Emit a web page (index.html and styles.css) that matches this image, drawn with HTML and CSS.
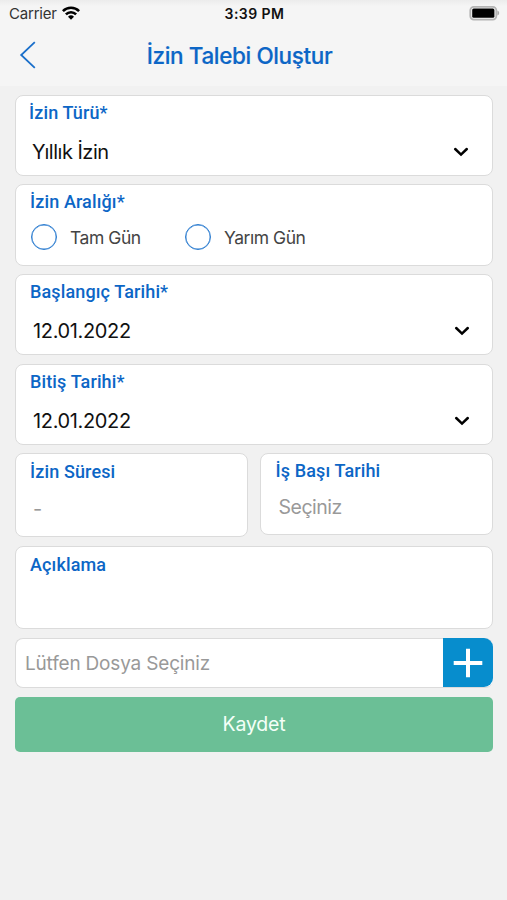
FILE: index.html
```html
<!DOCTYPE html>
<html lang="tr">
<head>
<meta charset="utf-8">
<meta name="viewport" content="width=device-width, initial-scale=1">
<title>İzin Talebi Oluştur</title>
<link rel="stylesheet" href="styles.css">
</head>
<body>
<header class="top">
  <div class="status">
    <div class="carrier"><span>Carrier</span>
      <svg class="wifi" width="18" height="14" viewBox="0 0 18 14" fill="none" stroke="#000" stroke-width="2.6"><path d="M.9 5.2a11.4 11.4 0 0 1 16.2 0M3.9 8.3a7.2 7.2 0 0 1 10.2 0"/><path d="M9 13.8L6 10.8a4.3 4.3 0 0 1 6 0z" fill="#000" stroke="none"/></svg>
    </div>
    <div class="time">3:39 PM</div>
    <svg class="battery" width="32" height="16" viewBox="0 0 32 16"><rect x="2.3" y="1.8" width="26" height="12.8" rx="3.5" fill="#f4f4f4" stroke="#b4b4b4" stroke-width="1.8"/><rect x="4.2" y="3.6" width="22.2" height="9.2" rx="1.5"/><path d="M29.4 5.6c2.4.8 2.4 4.2 0 5z" fill="#aaa"/></svg>
  </div>
  <div class="nav">
    <svg class="back" width="18" height="30" viewBox="0 0 18 30" fill="none" stroke="#1a6fca" stroke-width="1.8"><path d="M15.8 2.2L2.2 15l13.6 12.8"/></svg>
    <h1>İzin Talebi Oluştur</h1>
  </div>
</header>
<main class="form">
  <section class="card type">
    <div class="label">İzin Türü*</div>
    <div class="select"><span class="value v-type">Yıllık İzin</span><svg class="chevron" width="16" height="10" viewBox="0 0 16 10"><path d="M2.2 2L8 7.6 13.8 2"/></svg></div>
  </section>
  <section class="card">
    <div class="label">İzin Aralığı*</div>
    <div class="radios">
      <div class="radio"><i class="circle"></i><span>Tam Gün</span></div>
      <div class="radio"><i class="circle"></i><span>Yarım Gün</span></div>
    </div>
  </section>
  <section class="card">
    <div class="label">Başlangıç Tarihi*</div>
    <div class="select"><span class="value">12.01.2022</span><svg class="chevron" width="16" height="10" viewBox="0 0 16 10"><path d="M2.2 2L8 7.6 13.8 2"/></svg></div>
  </section>
  <section class="card">
    <div class="label">Bitiş Tarihi*</div>
    <div class="select"><span class="value">12.01.2022</span><svg class="chevron" width="16" height="10" viewBox="0 0 16 10"><path d="M2.2 2L8 7.6 13.8 2"/></svg></div>
  </section>
  <div class="pair">
    <section class="card duration">
      <div class="label">İzin Süresi</div>
      <div class="select"><span class="value hint">-</span></div>
    </section>
    <section class="card return">
      <div class="label">İş Başı Tarihi</div>
      <div class="select"><span class="value hint v-return">Seçiniz</span></div>
    </section>
  </div>
  <section class="card note">
    <div class="label">Açıklama</div>
  </section>
  <div class="file">
    <span class="hint">Lütfen Dosya Seçiniz</span>
    <button class="add" aria-label="Dosya ekle"><svg width="30" height="30" viewBox="0 0 30 30" fill="none" stroke="#fff" stroke-width="4"><path d="M15 .7v28.6M.7 15h28.6"/></svg></button>
  </div>
  <button class="save"><span>Kaydet</span></button>
</main>
</body>
</html>
```
FILE: styles.css
```css
* { box-sizing: border-box; }
body {
  margin: 0;
  height: 900px;
  overflow: hidden;
  background: #f1f1f1;
  font-family: Inter, "Liberation Sans", sans-serif;
  color: #111;
}
span, h1, .label { white-space: nowrap; }
.top {
  height: 86px;
  background: linear-gradient(#ececec, #f5f5f5 6px);
}
.status {
  height: 28px;
  display: grid;
  grid-template-columns: 1fr auto 1fr;
  align-items: center;
  padding: 0 7px 0 9px;
}
.carrier {
  display: flex;
  align-items: center;
  gap: 5px;
  font-size: 15px;
  line-height: 20px;
  letter-spacing: -.2px;
  color: #333;
}
.wifi { margin-top: -3px; }
.time {
  margin: -1px 0 0 0;
  font-size: 14px;
  font-weight: 600;
  letter-spacing: .45px;
}
.battery { justify-self: end; margin-top: -2px; }
.nav {
  height: 56px;
  display: grid;
  grid-template-columns: 60px 1fr 60px;
  align-items: center;
}
.back { margin: -2px 0 0 19px; }
h1 {
  margin: 0 0 0 -28px;
  text-align: center;
  font-size: 22.5px;
  line-height: 28px;
  font-weight: 500;
  letter-spacing: -.38px;
  -webkit-text-stroke: .2px #0c66c6;
  color: #0c66c6;
}
.form {
  padding: 8.7px 14px 0 15px;
  display: flex;
  flex-direction: column;
  gap: 8.5px;
}
.card {
  height: 81.2px;
  padding: 6px 22px 0 14px;
  border: 1px solid #dbdbdb;
  border-radius: 8px;
  background: #fff;
}
.type { padding: 6px 23px 0 13px; }
.label {
  font: 500 18px/22px Roboto, "Liberation Sans", sans-serif;
  letter-spacing: .13px;
  color: #0c66c6;
}
.select {
  margin: 12px 0 0 3px;
  height: 32px;
  display: flex;
  align-items: center;
  justify-content: space-between;
}
.value {
  font-size: 20px;
  line-height: 28px;
  letter-spacing: -.35px;
}
.v-type { letter-spacing: -.5px; }
.chevron {
  fill: none;
  stroke: #000;
  stroke-width: 2.5;
  stroke-linecap: round;
}
.radios { display: flex; margin: 8px 0 0 1px; }
.radio {
  display: flex;
  align-items: center;
  gap: 13px;
  width: 154px;
  height: 32px;
  font-size: 17.5px;
  letter-spacing: -.45px;
  color: #444;
}
.circle {
  width: 26px;
  height: 26px;
  border: 1px solid #2b7cd0;
  border-radius: 50%;
  box-shadow: inset 0 0 0 .4px #2b7cd0;
}
.pair {
  display: grid;
  grid-template-columns: 233px 233px;
  justify-content: space-between;
  align-items: start;
}
.duration { height: 83.7px; padding-top: 7px; }
.duration .select { margin-top: 10px; }
.return { padding-left: 14.5px; }
.return .select { margin-top: 9px; }
.v-return { font-size: 19.5px; letter-spacing: -.5px; }
.hint { color: #999; }
.note { height: 83.5px; padding-top: 7px; }
.file {
  height: 50px;
  display: flex;
  align-items: center;
  justify-content: space-between;
  padding-left: 9px;
  border: 1px solid #dbdbdb;
  border-right: 0;
  border-radius: 8px;
  background: #fff;
  font-size: 19px;
  letter-spacing: -.18px;
}
.file .hint { padding-top: 1px; }
.add {
  width: 50px;
  height: 49px;
  padding: 0;
  display: grid;
  place-items: center;
  border: 0;
  border-radius: 0 9px 9px 0;
  background: #078dcd;
}
.save {
  height: 55px;
  margin-top: .8px;
  border: 0;
  border-radius: 5px;
  background: #6bbf96;
  color: #f4fff8;
  font-family: Inter, "Liberation Sans", sans-serif;
  font-size: 19.5px;
  letter-spacing: -.2px;
}
```
